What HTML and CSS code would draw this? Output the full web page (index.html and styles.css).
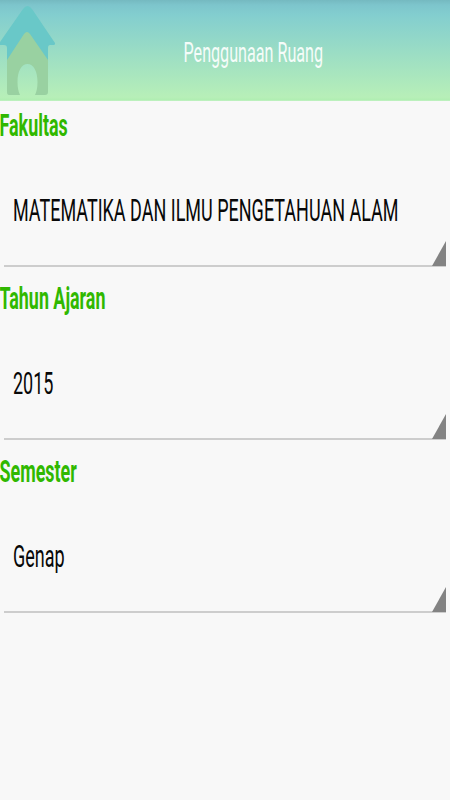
FILE: index.html
```html
<!DOCTYPE html>
<html lang="id">
<head>
<meta charset="utf-8">
<title>Penggunaan Ruang</title>
<link rel="stylesheet" href="styles.css">
</head>
<body>
<header class="bar">
  <svg class="home" viewBox="0 0 56 101" width="56" height="101">
    <path fill="#99d1a1" d="M7 58L22 34Q27 28 32 34L48 58V92Q48 95 45 95H35Q37.500 90 37.500 82C37.500 71 33.500 64 27.500 64S17.500 71 17.500 82Q17.500 90 20 95H9Q7 95 7 92Z"/>
    <path fill="#69c8c8" d="M0 42L23 9Q27.500 3 32 9L55 43Q55.500 45 53 45H50Q48 45 48 48V60L30 34Q27 30 24 34L7 60V48Q7 45 4 45H0Z"/>
  </svg>
  <h1 class="title"><span class="tall">Penggunaan Ruang</span></h1>
</header>
<main>
  <section class="field">
    <h2 class="label"><span class="tall">Fakultas</span></h2>
    <div class="spinner"><span class="tall">MATEMATIKA DAN ILMU PENGETAHUAN ALAM</span><svg class="corner" width="14" height="25" viewBox="0 0 14 25"><path d="M14 0V25H0Z"/></svg></div>
  </section>
  <section class="field">
    <h2 class="label"><span class="tall">Tahun Ajaran</span></h2>
    <div class="spinner"><span class="tall">2015</span><svg class="corner" width="14" height="25" viewBox="0 0 14 25"><path d="M14 0V25H0Z"/></svg></div>
  </section>
  <section class="field">
    <h2 class="label"><span class="tall">Semester</span></h2>
    <div class="spinner"><span class="tall">Genap</span><svg class="corner" width="14" height="25" viewBox="0 0 14 25"><path d="M14 0V25H0Z"/></svg></div>
  </section>
</main>
</body>
</html>
```
FILE: styles.css
```css
* { box-sizing: border-box; }
body {
  margin: 0;
  width: 450px;
  height: 800px;
  overflow: hidden;
  background: #f8f8f8;
  font-family: Roboto, "Liberation Sans", sans-serif;
}
.bar {
  display: flex;
  height: 101px;
  background: linear-gradient(#75b9c0 0, #7dc5cc 5px, #83cecf 15px, #b7efb8 97px, #b0eeb2 100px, #c8f3c9 101px);
}
.home { flex: none; }
.title {
  display: flex;
  flex: 1;
  margin: 0;
  padding: 3px 0 0 127.5px;
  align-items: center;
  font-size: 16.15px;
  font-weight: 400;
  color: #f5fcf9;
}
.tall {
  display: inline-block;
  white-space: nowrap;
  transform: scaleY(1.77);
  transform-origin: 0 50%;
}
.title .tall { transform: scaleY(1.733); }
.field { height: 173px; }
.label {
  height: 50px;
  margin: 0 0 0 -0.5px;
  font-size: 17.9px;
  line-height: 49px;
  font-weight: 700;
  color: #30b800;
}
.label .tall { transform: translateY(-1px) scaleY(1.77); }
.spinner {
  position: relative;
  height: 116px;
  margin: 0 4px;
  padding-left: 9px;
  border-bottom: 2px solid #cdcdcd;
  font-size: 18px;
  line-height: 118px;
  color: #080808;
}
.corner {
  position: absolute;
  right: 0;
  bottom: -1px;
  fill: #838383;
}
```
